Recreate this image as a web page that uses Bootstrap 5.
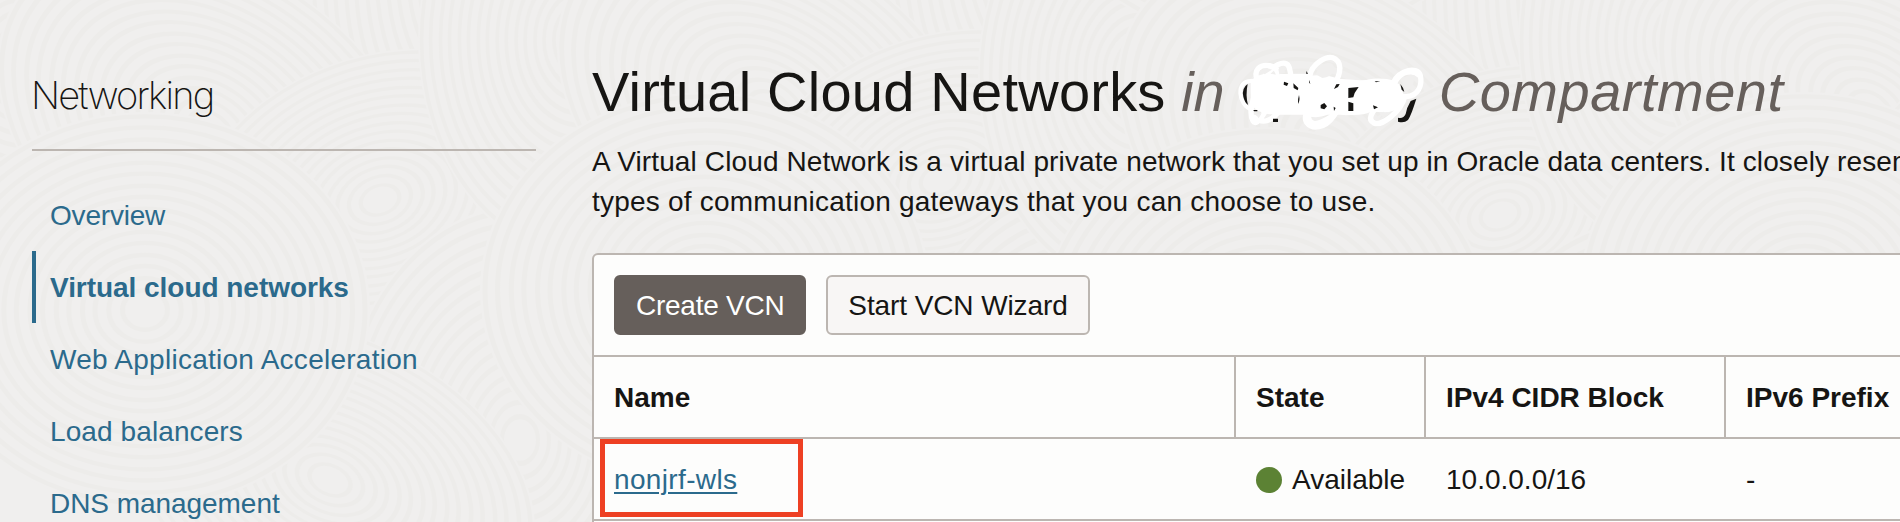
<!DOCTYPE html>
<html lang="en">
<head>
<meta charset="utf-8">
<title>Virtual Cloud Networks</title>
<link href="https://cdn.jsdelivr.net/npm/bootstrap@5.3.0/dist/css/bootstrap.min.css" rel="stylesheet">
<style>
body{width:1900px;height:522px;overflow:hidden;background:#f0efee;color:#161513;font:28px/40px "Liberation Sans",Arial,sans-serif;position:relative}
.texture{left:0;top:0;width:1900px;height:522px}
.shell{position:relative;padding-left:32px;gap:56px;height:522px;overflow:hidden}
.side{width:504px;flex:none;padding-top:67px}
.side-title{font:200 38px/56px Inter,"Liberation Sans",sans-serif;letter-spacing:-1.8px;height:84px;border-bottom:2px solid #bcb6b1;margin:0 0 28px;text-indent:-1px}
.side .nav-link{height:72px;line-height:74px;padding:0 0 0 14px;border-left:4px solid transparent;color:#2b6a8c;white-space:nowrap}
.side .nav-link.active{border-color:#2b6a8c;font-weight:700}
.t1{letter-spacing:-.2px}.t2{letter-spacing:-.04px}.t3{letter-spacing:.26px}.t4{letter-spacing:.1px}.t5{letter-spacing:-.05px}
.main{width:2400px;flex:none;padding-top:56px}
.page-title{font-size:56px;line-height:72px;height:86px;margin:0;font-weight:400;white-space:nowrap}
.page-title em{color:#665f5b}
.title-name{letter-spacing:.23px}
.title-comp{letter-spacing:.5px}
.hidden-name{width:214px;height:72px}
.hidden-name svg{left:3px;top:-11px}
.intro{margin:0 0 31px;height:80px;white-space:nowrap}
.d1{letter-spacing:.125px}.d2{letter-spacing:.22px}
.vcn-card{border:2px solid #bcb6b1;border-radius:6px;background:#fdfdfc;height:320px}
.toolbar{padding:20px;height:102px;border-bottom:2px solid #bcb6b1;gap:20px}
.vbtn{height:60px;border:2px solid #bcb6b1;border-radius:6px;font-size:28px;line-height:56px;padding:1px 20px 0;background:#f8f6f5;color:#161513;white-space:nowrap;letter-spacing:-.1px}
.vbtn-dark{background:#665f5b;border-color:#665f5b;color:#fff;width:192px;letter-spacing:-.25px}
.vbtn-light{width:264px}
.grid{display:grid;grid-template-columns:642px 190px 300px 1fr;height:82px;border-bottom:2px solid #bcb6b1;line-height:82px}
.grid>div{padding-left:20px;white-space:nowrap;height:80px}
.head{font-weight:700}
.head>div:not(:last-child){border-right:2px solid #bcb6b1}
.t8{letter-spacing:.35px}
.grid a{color:#2b6a8c;text-underline-offset:3px;text-decoration-thickness:2px}
.grid>.state-cell{height:82px}
.status-dot{width:26px;height:26px;border-radius:50%;background:#5c8234;margin-right:10px}
.callout{left:6px;top:0;width:203px;height:78px;border:5px solid #ee4023}
</style>
</head>
<body>
<svg class="texture position-absolute" viewBox="0 0 1900 522" aria-hidden="true">
<defs>
<g id="rings"><circle r="180" fill="#f0efee"/><g fill="none" stroke="#edecea" stroke-width="4"><circle r="176"/><circle r="166"/><circle r="155"/><circle r="145"/><circle r="134"/><circle r="124"/><circle r="113"/><circle r="103"/><circle r="92"/><circle r="82"/><circle r="71"/><circle r="61"/><circle r="50"/><circle r="40"/><circle r="29"/><circle r="18"/></g></g>
<g id="swirls"><use href="#rings" transform="translate(480 -20) scale(1 1.5)"/><use href="#rings" transform="translate(20 60) scale(.9 1.2)"/><use href="#rings" transform="translate(150 -150) scale(1.3 1)"/><use href="#rings" transform="translate(210 130) rotate(35) scale(1.3 .9)"/><use href="#rings" transform="translate(380 200) rotate(-20) scale(1.1 .8)"/><use href="#rings" transform="translate(520 440) scale(1 1.3)"/><use href="#rings" transform="translate(330 480) rotate(25) scale(1.2 .8)"/><use href="#rings" transform="translate(145 310) scale(1.25 1.1)"/></g>
</defs>
<use href="#swirls"/><use href="#swirls" x="560" y="-20"/><use href="#swirls" x="1120" y="15"/><use href="#swirls" x="1660" y="-20"/>
</svg>
<div class="shell d-flex">
<aside class="side">
<h2 class="side-title">Networking</h2>
<nav class="nav flex-column">
<a class="nav-link" href="#"><span class="t1">Overview</span></a>
<a class="nav-link active" href="#"><span class="t2">Virtual cloud networks</span></a>
<a class="nav-link" href="#"><span class="t3">Web Application Acceleration</span></a>
<a class="nav-link" href="#"><span class="t4">Load balancers</span></a>
<a class="nav-link" href="#"><span class="t5">DNS management</span></a>
</nav>
</aside>
<main class="main">
<h1 class="page-title d-flex"><span class="title-name">Virtual Cloud Networks</span><em class="title-in">&nbsp;in</em>
<span class="hidden-name position-relative"><svg class="position-absolute" width="210" height="90" viewBox="0 0 630 270" aria-hidden="true">
<g fill="none" stroke="#fff" stroke-width="16" stroke-linecap="round" stroke-linejoin="round">
<path fill="#fff" stroke-width="8" d="M72 110Q100 80 150 95L240 97Q290 90 330 105L395 110Q470 105 510 120L528 160Q520 190 480 198L430 196Q400 210 350 205L300 205Q260 220 235 205L150 205Q85 205 72 170Z"/>
<path stroke-width="12" d="M75 108C45 105 36 125 37 145S50 187 72 195"/>
<path d="M88 105C75 75 95 58 125 62S160 105 140 145S88 250 75 228S70 160 100 110S175 38 184 68S190 150 160 190S105 238 80 218"/>
<path d="M150 95H245C250 55 300 27 322 42S340 105 300 130S220 210 236 232S290 252 318 212S355 120 320 110S240 150 240 200S270 240 310 215"/>
<path d="M495 115C510 75 570 62 577 92S570 152 535 155S490 130 505 105S555 72 575 92M530 155C520 200 460 245 438 234S432 200 460 170M395 120Q440 100 500 115M400 185Q370 210 340 200"/>
</g>
<g fill="#161513"><path d="M59 117Q40 130 46 155Q50 172 60 180Q52 150 59 117Z"/><path d="M135 221h15v10h-15zM76 195h12v4H78z"/><path d="M168 110l13 5-4 8-10-4zM196 115l15 14-2 7-12-7zM213 150q4 16-3 27-1-15 3-27zM361 129l31-3-12 18-4 13-15 2zM361 170l15 5v23h-15zM278 180l11-6 8 10-8 9-11-3zM317 185l6 4-5 9zM435 181l15 6-12 6zM517 117q9 10 12 24l-8-7z"/><path d="M548 168L565 161Q550 210 540 225Q528 236 510 230V218Q526 222 533 207Q536 188 548 168Z"/><path d="M235 78l5 8-5 1zM244 105l3 13-4-6zM325 118l10-1-5 9-12 6zM440 109h17l-13 3z"/></g>
<g fill="#f0efee"><path d="M263 88Q270 62 297 54Q322 52 318 78Q308 97 283 99ZM520 108Q540 83 560 92Q557 132 532 139Q528 120 520 108ZM98 78Q112 65 132 74L110 88ZM151 73Q168 65 172 83L154 88ZM84 207L101 205 92 220ZM444 219L469 199 455 221Z"/></g>
</svg></span><em class="title-comp">Compartment</em></h1>
<p class="intro"><span class="d1">A Virtual Cloud Network is a virtual private network that you set up in Oracle data centers. It closely resembles</span><br><span class="d2">types of communication gateways that you can choose to use.</span></p>
<section class="vcn-card">
<div class="toolbar d-flex"><button class="vbtn vbtn-dark"><span>Create VCN</span></button><button class="vbtn vbtn-light"><span>Start VCN Wizard</span></button></div>
<div class="grid head"><div>Name</div><div>State</div><div>IPv4 CIDR Block</div><div>IPv6 Prefix</div></div>
<div class="grid"><div class="position-relative"><a href="#" class="t8">nonjrf-wls</a><i class="callout position-absolute"></i></div><div class="state-cell d-flex align-items-center"><i class="status-dot"></i><span>Available</span></div><div>10.0.0.0/16</div><div>-</div></div>
</section>
</main>
</div>
<script src="https://cdn.jsdelivr.net/npm/bootstrap@5.3.0/dist/js/bootstrap.bundle.min.js"></script>
</body>
</html>
